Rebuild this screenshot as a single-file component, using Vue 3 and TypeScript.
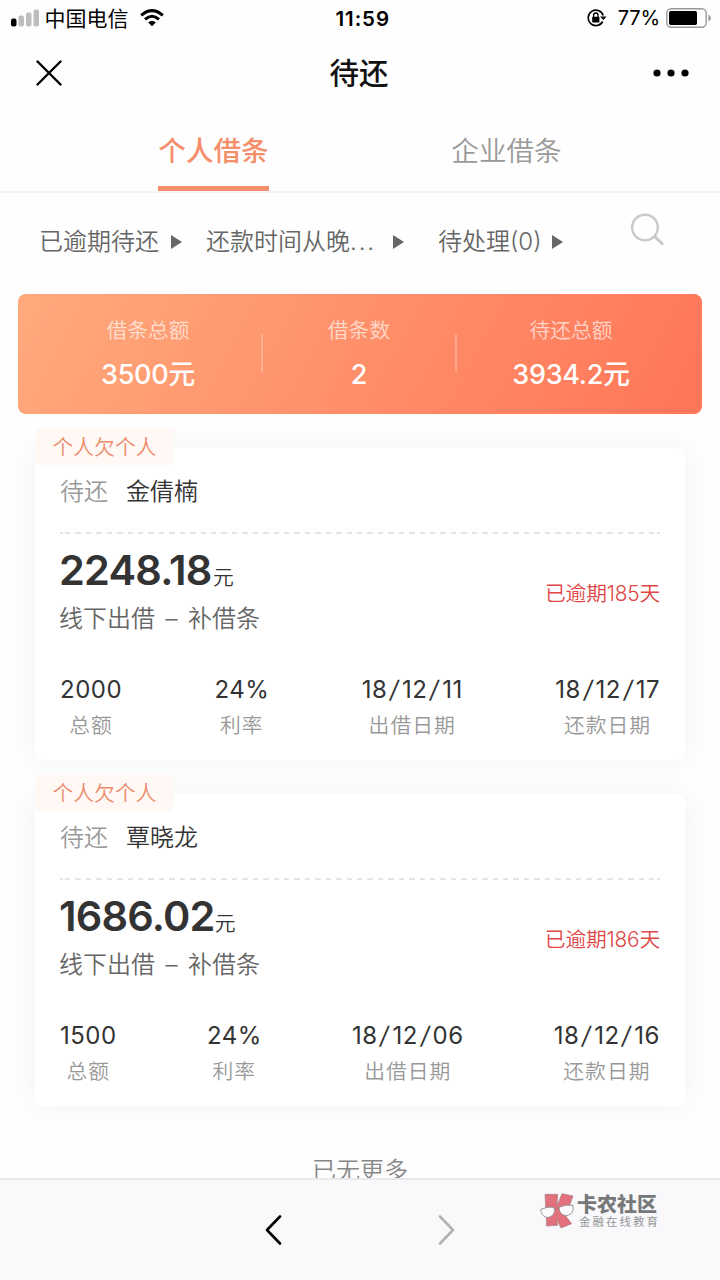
<script setup lang="ts">
interface Stat {
  value: string
  label: string
}

interface Loan {
  name: string
  amount: string
  overdue: string
  stats: Stat[]
}

const filters: { text: string; dots?: string; kind: string }[] = [
  { text: '已逾期待还', kind: 'state' },
  { text: '还款时间从晚', dots: '...', kind: 'sort' },
  { text: '待处理(0)', kind: 'pending' },
]

const totals: Stat[] = [
  { label: '借条总额', value: '3500元' },
  { label: '借条数', value: '2' },
  { label: '待还总额', value: '3934.2元' },
]

const loans: Loan[] = [
  {
    name: '金倩楠',
    amount: '2248.18',
    overdue: '已逾期185天',
    stats: [
      { value: '2000', label: '总额' },
      { value: '24%', label: '利率' },
      { value: '18/12/11', label: '出借日期' },
      { value: '18/12/17', label: '还款日期' },
    ],
  },
  {
    name: '覃晓龙',
    amount: '1686.02',
    overdue: '已逾期186天',
    stats: [
      { value: '1500', label: '总额' },
      { value: '24%', label: '利率' },
      { value: '18/12/06', label: '出借日期' },
      { value: '18/12/16', label: '还款日期' },
    ],
  },
]

// Splits a date into its numbers and slashes, so the slashes can be spaced out.
const parts = (value: string): string[] => value.split(/(\/)/)
</script>

<template>
  <div class="screen">
    <header class="status">
      <div class="carrier">
        <svg class="signal" width="28" height="18" viewBox="0 0 28 18">
          <rect x="0" y="9.5" width="5.5" height="8" rx="2" fill="#000" />
          <rect x="7.5" y="6.5" width="5.5" height="11" rx="2" fill="#bdbdbd" />
          <rect x="15" y="3.5" width="5.5" height="14" rx="2" fill="#bdbdbd" />
          <rect x="22.5" y="0.5" width="5.5" height="17" rx="2" fill="#bdbdbd" />
        </svg>
        <span class="carrier-name">中国电信</span>
        <svg class="wifi" width="24" height="18" viewBox="0 0 24 18">
          <g fill="none" stroke="#000" stroke-width="3">
            <path d="M1.2 6.4 Q12 -3.2 22.8 6.4" />
            <path d="M5 10.3 Q12 4.1 19 10.3" />
          </g>
          <path d="M8.2 13.4 Q12 10 15.8 13.4 L12 17.2 Z" />
        </svg>
      </div>
      <span class="time">11:59</span>
      <div class="battery">
        <svg class="lock" width="20" height="18" viewBox="0 0 20 18">
          <path d="M15.7 12.5 A7.7 7.7 0 1 1 16.2 6.4" fill="none" stroke="#000" stroke-width="1.6" />
          <path d="M13 7.4 H19.5 L16.5 11 Z" />
          <rect x="5.2" y="7.8" width="7.2" height="5.6" rx="0.7" />
          <path d="M6.6 8 V6.2 a2.2 2.2 0 0 1 4.4 0 V8" fill="none" stroke="#000" stroke-width="1.3" />
        </svg>
        <span class="percent">77%</span>
        <svg class="cell" width="46" height="20" viewBox="0 0 46 20">
          <rect x="0.8" y="0.8" width="39.4" height="18.4" rx="4.5" fill="none" stroke="#999" stroke-width="1.4" />
          <rect x="3" y="3" width="28" height="14" rx="1.8" />
          <path d="M42.4 6.5 Q45 8 45 10 Q45 12 42.4 13.5 Z" fill="#999" />
        </svg>
      </div>
    </header>

    <div class="titlebar">
      <svg class="close" width="26" height="26" viewBox="0 0 26 26">
        <path d="M1.5 1.5 L24.5 24.5 M24.5 1.5 L1.5 24.5" stroke="#000" stroke-width="2.4" stroke-linecap="round" />
      </svg>
      <h1>待还</h1>
      <svg class="more" width="36" height="8" viewBox="0 0 36 8">
        <circle cx="4" cy="4" r="3.6" />
        <circle cx="18" cy="4" r="3.6" />
        <circle cx="32" cy="4" r="3.6" />
      </svg>
    </div>

    <nav class="tabs">
      <span class="tab active">个人借条</span>
      <span class="tab">企业借条</span>
    </nav>

    <main>
      <div class="filters">
        <span v-for="f in filters" :key="f.kind" :class="['filter', f.kind]">
          <span class="filter-text">{{ f.text }}<span v-if="f.dots" class="dots">{{ f.dots }}</span></span>
          <i class="caret"></i>
        </span>
        <svg class="search" width="34" height="34" viewBox="0 0 34 34">
          <g fill="none" stroke="#c9c9c9">
            <circle cx="15" cy="14.5" r="12.8" stroke-width="2.4" />
            <path d="M24.3 23.2 L33 31.5" stroke-width="3" />
          </g>
        </svg>
      </div>

      <section class="summary">
        <div v-for="t in totals" :key="t.label" class="total">
          <span class="total-label">{{ t.label }}</span>
          <span class="total-value">{{ t.value }}</span>
        </div>
      </section>

      <article v-for="loan in loans" :key="loan.name" class="loan">
        <span class="tag">个人欠个人</span>
        <div class="who"><span class="who-label">待还</span>{{ loan.name }}</div>
        <div class="dash"></div>
        <div class="detail">
          <div>
            <div class="amount">{{ loan.amount }}<small>元</small></div>
            <div class="note">线下出借 – 补借条</div>
          </div>
          <span class="overdue">{{ loan.overdue }}</span>
        </div>
        <div class="stats">
          <div v-for="s in loan.stats" :key="s.label" class="stat">
            <span class="stat-value"><span v-for="(p, i) in parts(s.value)" :key="i" :class="{ slash: p === '/' }">{{ p }}</span></span>
            <span class="stat-label">{{ s.label }}</span>
          </div>
        </div>
      </article>

      <p class="end">已无更多</p>
    </main>

    <footer class="bottom">
      <svg class="back" width="17" height="30" viewBox="0 0 17 30">
        <path d="M15 1.5 L2 15 L15 28.5" fill="none" stroke="#000" stroke-width="2.6" stroke-linecap="round" stroke-linejoin="round" />
      </svg>
      <svg class="forward" width="17" height="30" viewBox="0 0 17 30">
        <path d="M2 1.5 L15 15 L2 28.5" fill="none" stroke="#b2b2b4" stroke-width="2.6" stroke-linecap="round" stroke-linejoin="round" />
      </svg>
      <div class="brand">
        <svg width="34" height="36" viewBox="0 0 102 108">
          <g fill="#e3707d" stroke="#a27b82" stroke-width="2">
            <path d="M15 4 L53 4 L51 39 L66 2 L99 9 L84 51 L72 62 L95 92 L63 105 L50 78 L53 97 L20 99 Z" />
          </g>
          <g fill="#fbfbfd" stroke="#8d8589" stroke-width="2.5">
            <path d="M2 49 Q20 40 42 43 Q47 56 39 66 Q31 75 19 73 Q4 69 2 49 Z" />
            <path d="M57 43 Q76 34 99 37 Q102 51 95 60 Q86 70 72 67 Q57 61 57 43 Z" />
            <path d="M44 48 Q50 42 57 46" fill="none" />
          </g>
        </svg>
        <div class="brand-text">
          <b>卡农社区</b>
          <span>金融在线教育</span>
        </div>
      </div>
    </footer>
  </div>
</template>

<style>
body {
  margin: 0;
  background: #fff;
}
</style>

<style scoped>
.screen {
  width: 720px;
  height: 1280px;
  display: flex;
  flex-direction: column;
  overflow: hidden;
  background: #fefefe;
  color: #333;
  font-family: Inter, "Noto Sans CJK SC", sans-serif;
  font-weight: 350;
  white-space: nowrap;
}
svg {
  display: block;
  flex: none;
}
.status {
  height: 36px;
  flex: none;
  display: grid;
  grid-template-columns: 1fr auto 1fr;
  grid-template-rows: 36px;
  align-items: center;
  padding: 0 8px 0 10.5px;
  color: #000;
  font-weight: 400;
}
.carrier,
.battery {
  display: flex;
  align-items: center;
  height: 36px;
}
.carrier-name {
  margin-left: 6px;
  font-size: 21px;
  line-height: 37px;
}
.wifi {
  margin-left: 11px;
}
.time {
  margin-left: 3px;
  font-size: 20.5px;
  font-weight: 600;
  line-height: 37px;
  letter-spacing: 0.9px;
}
.battery {
  justify-content: flex-end;
}
.percent {
  margin: 0 6px 0 11px;
  font-size: 20px;
  line-height: 37px;
  letter-spacing: -0.1px;
}
.titlebar {
  height: 74px;
  flex: none;
  display: grid;
  grid-template-columns: 1fr auto 1fr;
  grid-template-rows: 74px;
  align-items: center;
  padding: 0 31px;
}
.close {
  margin-left: 5px;
}
h1 {
  margin: 0 2px 0 0;
  color: #111;
  font-size: 29.5px;
  font-weight: 500;
  line-height: 76px;
}
.more {
  justify-self: end;
}
.tabs {
  height: 81px;
  flex: none;
  display: grid;
  grid-template-columns: 1fr 1fr;
  justify-items: center;
  padding: 0 67px;
  border-bottom: 2px solid #f5f5f5;
}
.tab {
  height: 76px;
  font-size: 27.6px;
  line-height: 83px;
  color: #999;
}
.tab.active {
  color: #f58e6b;
  font-weight: 500;
  border-bottom: 5px solid #f58e6b;
}
main {
  flex: 1;
  min-height: 0;
  overflow: hidden;
}
.filters {
  height: 101px;
  display: flex;
  padding: 0 56px 0 39px;
  font-size: 24px;
  line-height: 97px;
  color: #666;
}
.filter {
  display: flex;
  align-items: center;
  height: 97px;
}
.state {
  width: 167px;
}
.sort {
  width: 232px;
}
.dots {
  letter-spacing: 1.9px;
}
.caret {
  margin-left: 12px;
  border-left: 11px solid #666;
  border-top: 7px solid transparent;
  border-bottom: 7px solid transparent;
}
.sort .caret {
  margin-left: 16.5px;
}
.pending .caret {
  margin-left: 10px;
}
.search {
  margin: 20px 0 0 auto;
}
.summary {
  height: 120px;
  margin: 0 18px;
  display: grid;
  grid-template-columns: 244px 194px 1fr;
  border-radius: 8px;
  background: linear-gradient(118deg, #ffaa7c 0%, #ff7557 100%);
}
.total {
  position: relative;
  display: flex;
  flex-direction: column;
  align-items: center;
  color: #fff;
}
.total:first-child {
  padding-left: 16px;
}
.total:last-child {
  padding-right: 16px;
}
.total + .total::before {
  content: "";
  position: absolute;
  left: -1px;
  top: 40px;
  width: 2px;
  height: 38px;
  background: rgba(255, 255, 255, 0.25);
}
.total-label {
  margin-top: 21px;
  font-size: 20.8px;
  line-height: 32px;
  opacity: 0.65;
}
.total-value {
  margin-top: 8px;
  font-size: 27px;
  font-weight: 500;
  line-height: 40px;
  letter-spacing: -0.3px;
}
.loan {
  position: relative;
  height: 312px;
  margin: 34px 35px 0;
  padding: 0 25px;
  box-sizing: border-box;
  border-radius: 8px;
  background: #fff;
  box-shadow: 0 0 30px rgba(0, 0, 0, 0.05);
}
.tag {
  position: absolute;
  left: 0;
  top: -20px;
  width: 139px;
  height: 37px;
  border-radius: 5px;
  background: #fff8f4;
  color: #ec8a6a;
  font-size: 20.8px;
  line-height: 39px;
  text-align: center;
}
.who {
  height: 84px;
  font-size: 24px;
  line-height: 87px;
}
.who-label {
  margin-right: 18px;
  color: #999;
}
.dash {
  height: 2px;
  background:
    linear-gradient(#e5e5e5, #e5e5e5) 0 0 / 3px 2px no-repeat,
    repeating-linear-gradient(90deg, #e5e5e5 0 5.4px, transparent 5.4px 10.43px) 5.3px 0 / 592px 2px no-repeat,
    linear-gradient(#e5e5e5, #e5e5e5) 100% 0 / 3px 2px no-repeat;
}
.detail {
  height: 139px;
  display: flex;
  justify-content: space-between;
}
.amount {
  height: 65px;
  width: 174px;
  display: flex;
  justify-content: space-between;
  margin-left: -1px;
  font-size: 41.5px;
  font-weight: 600;
  line-height: 72px;
  letter-spacing: -0.8px;
}
small {
  padding-top: 8px;
  font-size: 20.8px;
  font-weight: 350;
}
.note {
  margin-left: -1px;
  font-size: 24px;
  line-height: 40px;
  word-spacing: 3.7px;
  color: #666;
}
.overdue {
  margin-top: 41px;
  font-size: 20.8px;
  line-height: 38px;
  letter-spacing: -0.2px;
  color: #e04848;
}
.stats {
  display: flex;
  justify-content: space-between;
}
.stat {
  display: flex;
  flex-direction: column;
  align-items: center;
}
.stat-value {
  font-size: 24px;
  font-weight: 400;
  line-height: 34px;
  letter-spacing: 0.5px;
}
.slash {
  display: inline-block;
  margin: 0 2.8px;
  font-weight: 400;
  transform: skewX(-9deg);
}
.stat-label {
  font-size: 20.8px;
  line-height: 38px;
  letter-spacing: 1px;
  color: #999;
}
.end {
  margin: 46px 0 0;
  font-size: 24px;
  line-height: 37px;
  text-align: center;
  color: #888;
}
.bottom {
  height: 100px;
  flex: none;
  display: flex;
  align-items: center;
  border-top: 2px solid #e8e8ea;
  background: #f9f9fb;
}
.back {
  margin-left: 265px;
}
.forward {
  margin-left: 156px;
}
.brand {
  display: flex;
  margin: -38px 0 0 85px;
}
.brand-text {
  display: flex;
  flex-direction: column;
  margin-left: 3px;
  color: #77787a;
}
.brand-text b {
  font-size: 20px;
  font-weight: 900;
  line-height: 24px;
}
.brand-text span {
  margin-left: 2px;
  font-size: 11.5px;
  font-weight: 400;
  line-height: 11px;
  letter-spacing: 2px;
  color: #96979a;
}
</style>
